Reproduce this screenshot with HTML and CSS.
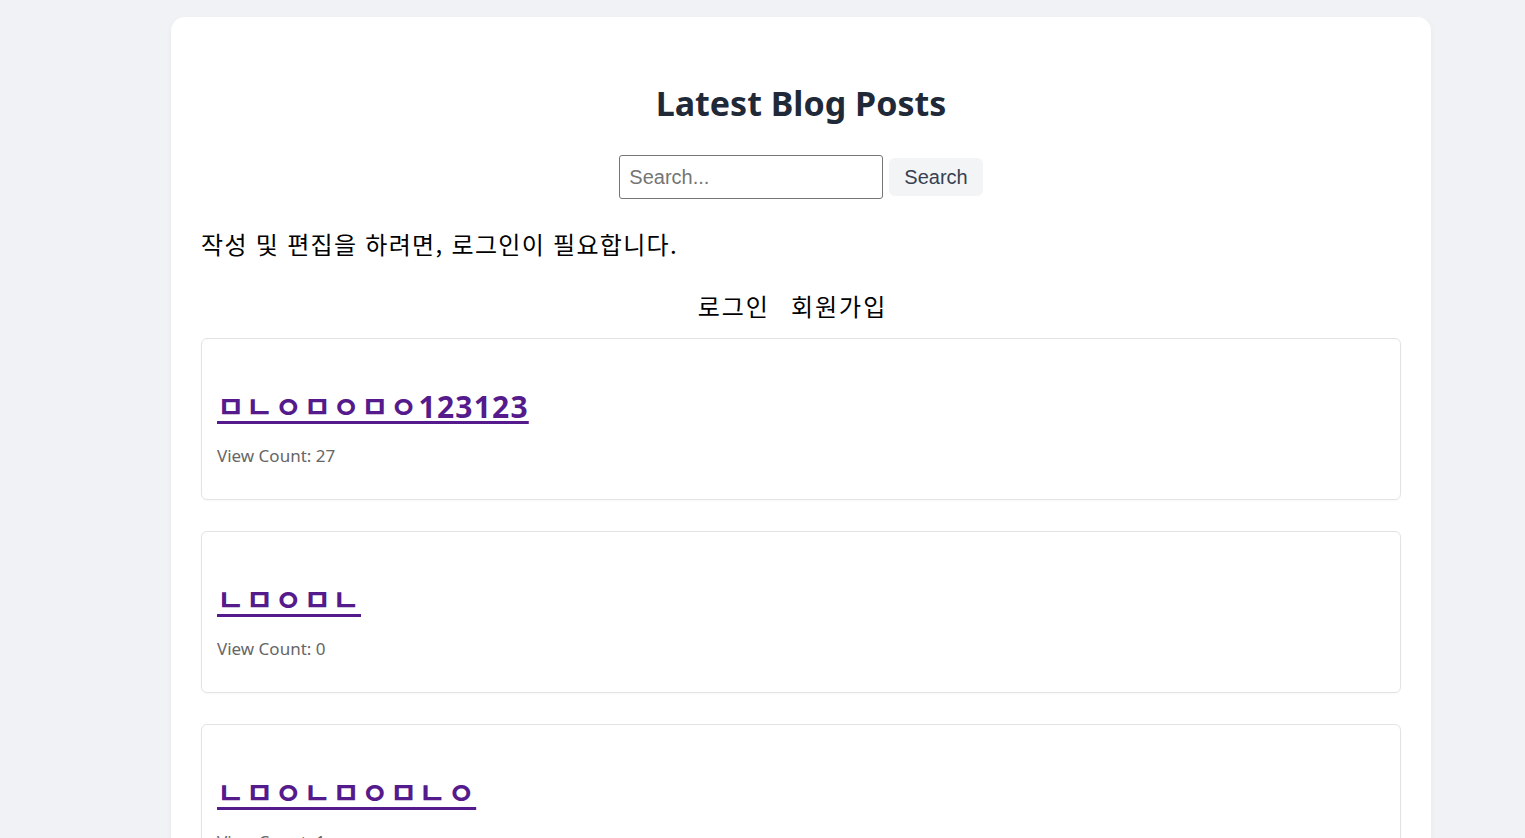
FILE: index.html
```html
<!DOCTYPE html>
<html lang="ko">
<head>
<meta charset="utf-8">
<title>Latest Blog Posts</title>
<link rel="stylesheet" href="styles.css">
</head>
<body>
<div class="page">
  <main class="container">
    <h1 class="title">Latest Blog Posts</h1>
    <form class="search" onsubmit="return false">
      <input class="search-input" type="text" placeholder="Search...">
      <button class="search-btn" type="submit">Search</button>
    </form>
    <p class="notice">작성 및 편집을 하려면, 로그인이 필요합니다.</p>
    <nav class="auth">
      <a class="auth-link" href="#">로그인</a>
      <a class="auth-link" href="#">회원가입</a>
    </nav>
    <ul class="posts">
      <li class="card">
        <h2 class="post-title"><a href="#">ㅁㄴㅇㅁㅇㅁㅇ123123</a></h2>
        <p class="views">View Count: 27</p>
      </li>
      <li class="card">
        <h2 class="post-title"><a href="#">ㄴㅁㅇㅁㄴ</a></h2>
        <p class="views">View Count: 0</p>
      </li>
      <li class="card">
        <h2 class="post-title"><a href="#">ㄴㅁㅇㄴㅁㅇㅁㄴㅇ</a></h2>
        <p class="views">View Count: 1</p>
      </li>
    </ul>
  </main>
</div>
</body>
</html>
```

FILE: styles.css
```css
* { box-sizing: border-box; }
html, body { margin: 0; padding: 0; }
body {
  background: #f0f2f5;
  font-family: "Noto Sans", "Noto Sans CJK KR", sans-serif;
  color: #000;
  overflow: hidden;
  height: 838px;
}
.page {
  display: flex;
  justify-content: flex-start;
  padding-top: 17px;
  padding-left: 171px;
}
.container {
  width: 1260px;
  background: #fff;
  border-radius: 14px;
  padding: 46px 30px 30px;
  box-shadow: 0 2px 6px rgba(0,0,0,0.04);
  min-height: 900px;
}
.title {
  margin: 0;
  text-align: center;
  font-size: 34px;
  line-height: 80px;
  font-weight: 700;
  color: #1f2937;
  height: 80px;
}
.search {
  display: flex;
  justify-content: center;
  align-items: center;
  gap: 6px;
  margin-top: 12px;
}
.search-input {
  width: 264px;
  height: 44px;
  border: 1px solid #767676;
  border-radius: 3px;
  padding: 0 9px;
  font-family: "Liberation Sans", Arial, sans-serif;
  font-size: 20px;
  color: #222;
  outline: none;
}
.search-input::placeholder { color: #757575; }
.search-btn {
  height: 38px;
  border: none;
  background: #f3f4f6;
  border-radius: 6px;
  padding: 0 15px;
  font-family: "Liberation Sans", Arial, sans-serif;
  font-size: 20px;
  color: #374151;
}
.notice {
  margin: 25px 0 0;
  font-family: "Noto Sans CJK KR", sans-serif;
  font-size: 24px;
  letter-spacing: 1.3px;
  line-height: 40px;
  color: #000;
}
.auth {
  display: flex;
  justify-content: center;
  gap: 21px;
  margin-top: 24px;
  padding-right: 17px;
}
.auth-link {
  font-family: "Noto Sans CJK KR", sans-serif;
  font-size: 24px;
  letter-spacing: 2px;
  line-height: 36px;
  color: #000;
  text-decoration: none;
}
.posts {
  list-style: none;
  margin: 14px 0 0;
  padding: 0;
  display: flex;
  flex-direction: column;
  gap: 31px;
}
.card {
  border: 1px solid #e3e3e3;
  border-radius: 6px;
  padding: 0 15px;
  height: 162px;
  box-shadow: 0 1px 2px rgba(0,0,0,0.03);
}
.post-title {
  margin: 48px 0 0;
  font-size: 30px;
  line-height: 40px;
  font-weight: 700;
}
.post-title a {
  color: #551a8b;
  letter-spacing: 1.2px;
  text-decoration: underline;
  text-decoration-thickness: 3px;
  text-underline-offset: 3px;
  font-family: "Noto Sans", "Noto Sans CJK KR", sans-serif;
}
.views {
  margin: 17px 0 0;
  font-size: 17px;
  line-height: 24px;
  color: #666;
}
```
